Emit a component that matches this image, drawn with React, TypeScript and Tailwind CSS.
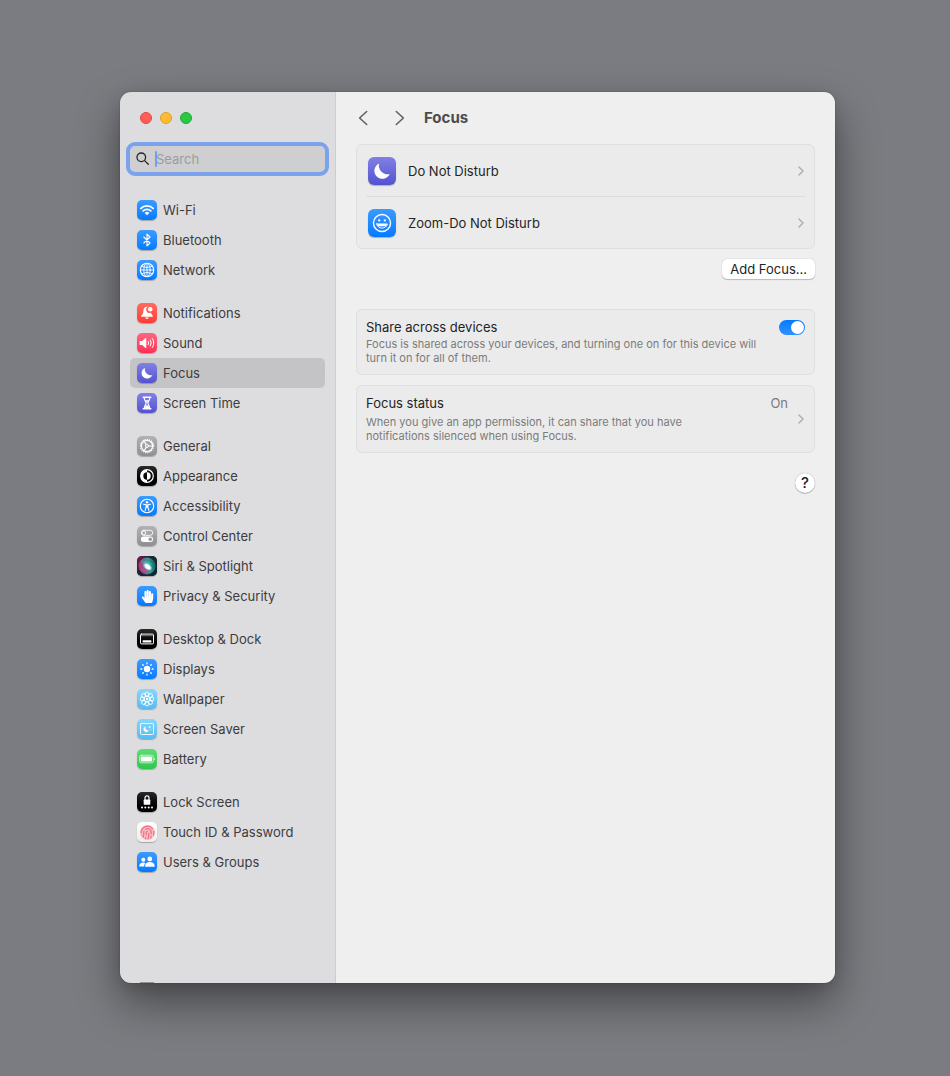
import { useState, type ReactNode } from "react";
import { Fingerprint } from "lucide-react";
import { FaHandPaper } from "react-icons/fa";
import clsx from "clsx";

const BLUE = "bg-linear-to-b from-[#3a9bff] to-[#007aff]";
const RED = "bg-linear-to-b from-[#ff6a61] to-[#ff3b30]";
const PINK = "bg-linear-to-b from-[#ff6482] to-[#ff2d55]";
const PURPLE = "bg-linear-to-b from-[#8280e6] to-[#5452d0]";
const GRAY = "bg-linear-to-b from-[#b2b2b5] to-[#8f8f93]";
const BLACK = "bg-linear-to-b from-[#2a2a2a] to-black";
const SKY = "bg-linear-to-b from-[#84d8fb] to-[#56bbf0]";
const GREEN = "bg-linear-to-b from-[#5edc74] to-[#2bc84a]";
const WHITE = "bg-linear-to-b from-white to-[#ececec]";

function Glyph({ children }: { children: ReactNode }) {
  return (
    <svg viewBox="0 0 20 20" className="size-full" fill="none" stroke="white" strokeLinecap="round" strokeLinejoin="round" aria-hidden="true">
      {children}
    </svg>
  );
}

const Moon = () => (
  <Glyph>
    <path d="M7.9 4.7A5.7 5.7 0 1 0 15.5 12.1 6.2 6.2 0 0 1 7.9 4.7Z" fill="white" stroke="none" />
  </Glyph>
);

const Wifi = () => (
  <Glyph>
    <path d="M3.9 8.4a8.6 8.6 0 0 1 12.2 0M6.2 10.9a5.4 5.4 0 0 1 7.6 0" strokeWidth="1.8" />
    <path d="M10 15.2 7.7 12.9a3.2 3.2 0 0 1 4.6 0Z" fill="white" stroke="none" />
  </Glyph>
);

const Bluetooth = () => (
  <Glyph>
    <path d="m6.8 7 6.2 6-3 2.9V4.1L13 7l-6.2 6" strokeWidth="1.1" />
  </Glyph>
);

const Network = () => (
  <Glyph>
    <circle cx="10" cy="10" r="6.7" strokeWidth="1.1" />
    <ellipse cx="10" cy="10" rx="3.2" ry="6.7" strokeWidth=".9" />
    <path d="M3.4 10h13.2M10 3.4v13.2M4.8 6.2c3 1.7 7.4 1.7 10.4 0M4.8 13.8c3-1.7 7.4-1.7 10.4 0" strokeWidth=".9" />
  </Glyph>
);

const Bell = () => (
  <Glyph>
    <path d="M10.9 3.8C7.7 3.4 6.4 5.7 6.3 8.2c-.1 2.200-.6 2.900-1.900 4.200-.5.600-.2 1.400.6 1.400h10c.8 0 1.100-.8.6-1.400-.9-1-1.500-1.600-1.600-2.900a3.200 3.200 0 0 1-3.100-5.700ZM8.200 14.500h3.600c-.3 1.900-3.300 1.900-3.600 0Z" fill="white" stroke="none" />
    <circle cx="13.200" cy="6.200" r="2.300" fill="white" stroke="none" />
  </Glyph>
);

const Sound = () => (
  <Glyph>
    <path d="M3.2 8h2l3.300-2.900c.4-.3.800-.1.800.4v9c0 .5-.4.700-.8.400L5.200 12h-2c-.4 0-.6-.2-.6-.6V8.600c0-.4.200-.6.600-.6Z" fill="white" stroke="none" />
    <path d="M11.200 8.300q1.100 1.700 0 3.400M13.300 7q2.100 3 0 6M15.400 5.600q3 4.400 0 8.800" strokeWidth="1" />
  </Glyph>
);

const Hourglass = () => (
  <Glyph>
    <path d="M6.200 4.200h7.600M6.200 15.800h7.600" strokeWidth="1.500" />
    <path d="M7.300 4.700c0 3 1.800 3.600 1.800 5.300s-1.800 2.300-1.800 5.300h5.400c0-3-1.800-3.600-1.800-5.300s1.800-2.300 1.800-5.300" strokeWidth="1.200" />
    <path d="M8.200 7.200h3.600L10 9.800ZM7.800 15.300c0-1.800 1.100-2.600 2.200-3.300 1.100.7 2.200 1.500 2.200 3.300Z" fill="white" stroke="none" />
  </Glyph>
);

const Gear = () => (
  <Glyph>
    <circle cx="10" cy="10" r="6.600" strokeWidth="1.200" strokeDasharray="1.200 1" strokeLinecap="butt" />
    <circle cx="10" cy="10" r="5.600" strokeWidth="1.200" />
    <circle cx="10" cy="10" r="1.500" strokeWidth="1" />
    <path d="M11.600 10h4M9.200 8.600 7.200 5.200M9.200 11.400l-2 3.400" strokeWidth="1.100" />
  </Glyph>
);

const Appearance = () => (
  <Glyph>
    <circle cx="10" cy="10" r="6.300" strokeWidth="1.200" />
    <path d="M10 3.700a6.300 6.300 0 0 0 0 12.600v-2.600a3.700 3.700 0 0 1 0-7.400ZM10 6.300a3.700 3.700 0 0 1 0 7.400Z" fill="white" stroke="none" />
  </Glyph>
);

const Accessibility = () => (
  <Glyph>
    <circle cx="10" cy="10" r="6.700" strokeWidth="1.100" />
    <circle cx="10" cy="6.300" r="1.200" fill="white" stroke="none" />
    <path d="m6.500 8.200 2.600.6v2.300L8.200 14.400M13.500 8.200l-2.600.6v2.300l.9 3.300" strokeWidth="1.100" />
    <path d="M9 8.500h2v3.200H9Z" fill="white" stroke="none" />
  </Glyph>
);

const ControlCenter = () => (
  <Glyph>
    <rect x="4.300" y="4.300" width="11.400" height="5" rx="2.500" strokeWidth=".9" />
    <circle cx="6.800" cy="6.800" r="1.900" strokeWidth=".9" />
    <rect x="3.900" y="10.600" width="12.200" height="5.400" rx="2.700" fill="white" stroke="none" />
    <circle cx="13.300" cy="13.300" r="1.800" fill="#97979b" stroke="none" />
  </Glyph>
);

const Siri = () => (
  <svg viewBox="0 0 20 20" className="size-full" aria-hidden="true">
    <defs>
      <linearGradient id="siri-bg" x1="0" y1="0" x2="1" y2=".6">
        <stop offset="0" stopColor="#8c1546" />
        <stop offset=".45" stopColor="#26213a" />
        <stop offset="1" stopColor="#0b2a30" />
      </linearGradient>
      <linearGradient id="siri-orb" x1="0" y1=".6" x2="1" y2=".4">
        <stop offset="0" stopColor="#d4245f" />
        <stop offset=".35" stopColor="#6c6aa0" />
        <stop offset=".65" stopColor="#2a9c94" />
        <stop offset="1" stopColor="#155f5a" />
      </linearGradient>
      <radialGradient id="siri-core">
        <stop offset="0" stopColor="white" />
        <stop offset=".5" stopColor="#dcecff" stopOpacity=".9" />
        <stop offset="1" stopColor="#7fb9f0" stopOpacity="0" />
      </radialGradient>
    </defs>
    <rect width="20" height="20" fill="url(#siri-bg)" />
    <circle cx="10" cy="10" r="8.200" fill="url(#siri-orb)" stroke="#4fb5a5" strokeOpacity=".5" strokeWidth=".6" />
    <path d="M3.500 6.500C7 3.500 14 4.500 16.500 9.500 12 7.500 8 7 3.500 6.500Z" fill="#39c793" opacity=".5" />
    <path d="M3 11.500c3 5 8 6 11.500 3.500-4-.2-8-1.500-11.500-3.500Z" fill="#e8427a" opacity=".7" />
    <ellipse cx="10.500" cy="10.500" rx="6" ry="3.800" fill="url(#siri-core)" transform="rotate(38 10.500 10.500)" />
    <ellipse cx="10.800" cy="10.800" rx="3.200" ry="1.700" fill="white" transform="rotate(38 10.800 10.800)" />
  </svg>
);

const Hand = () => (
  <span className="flex size-full items-center justify-center">
    <FaHandPaper className="size-[13px] text-white" />
  </span>
);

const Dock = () => (
  <Glyph>
    <rect x="3.500" y="5.100" width="13" height="9.800" rx="1" strokeWidth="1" />
    <path d="M4 6.700h12" strokeWidth=".7" opacity=".6" />
    <rect x="5.600" y="11.300" width="8.800" height="2.200" rx=".4" fill="white" stroke="none" />
  </Glyph>
);

const Sun = () => (
  <Glyph>
    <circle cx="10" cy="10" r="3.200" fill="white" stroke="none" />
    <path d="M10 3.900v.9M10 15.200v.9M3.900 10h.9M15.200 10h.9M5.700 5.700l.6.600M13.700 13.700l.6.600M5.700 14.300l.6-.6M13.700 6.300l.6-.6" strokeWidth="1.300" />
  </Glyph>
);

const Flower = () => (
  <Glyph>
    {[0, 45, 90, 135, 180, 225, 270, 315].map((deg) => (
      <circle key={deg} cx="10" cy="5.200" r="2.100" strokeWidth=".9" transform={`rotate(${deg} 10 10)`} />
    ))}
    <circle cx="10" cy="10" r="2.900" strokeWidth=".9" />
    <circle cx="10" cy="10" r="1.200" fill="white" stroke="none" />
  </Glyph>
);

const ScreenSaver = () => (
  <Glyph>
    <rect x="3.500" y="4.500" width="13" height="11" rx="1" strokeWidth=".9" />
    <path d="M8.200 7.800a2.700 2.700 0 1 0 3.500 3.700A3 3 0 0 1 8.200 7.800Z" fill="white" stroke="white" strokeWidth=".3" />
    <path d="M12.700 7.500v1.200M12.100 8.100h1.200M13.600 10.700h.1" strokeWidth=".8" />
  </Glyph>
);

const Battery = () => (
  <Glyph>
    <rect x="2.500" y="6.200" width="13.800" height="7.600" rx="2" strokeWidth=".8" opacity=".8" />
    <rect x="3.700" y="7.400" width="11.400" height="5.200" rx="1.100" fill="white" stroke="none" />
    <path d="M17.300 8.800c1 .4 1 2 0 2.400Z" fill="white" stroke="none" />
  </Glyph>
);

const Lock = () => (
  <Glyph>
    <path d="M8 8V5.900a2 2 0 0 1 4 0V8" strokeWidth="1.200" />
    <rect x="6.700" y="7.400" width="6.600" height="5.400" rx=".9" fill="white" stroke="none" />
    {[5, 8.300, 11.700, 15].map((cx) => (
      <circle key={cx} cx={cx} cy="15.500" r="1" fill="white" stroke="none" />
    ))}
  </Glyph>
);

const TouchId = () => (
  <span className="flex size-full items-center justify-center">
    <span className="flex size-[15px] items-center justify-center overflow-hidden rounded-full bg-[#f9bcc4]">
      <Fingerprint className="size-[15px] text-[#ee7384]" strokeWidth={2} />
    </span>
  </span>
);

const Users = () => (
  <Glyph>
    <g fill="white" stroke="none">
      <circle cx="6.300" cy="7.700" r="2" />
      <path d="M2.200 14.200c0-2.400 1.700-3.800 4.100-3.800.8 0 1.500.2 2.200.5-.9.800-1.300 1.900-1.300 3.500H2.600c-.3 0-.4-.1-.4-.2Z" />
      <circle cx="12.800" cy="7" r="2.400" />
      <path d="M8.100 14.200c0-2.600 2-4.100 4.700-4.100s4.900 1.500 4.900 4.100c0 .4-.3.500-.6.500H8.700c-.4 0-.6-.1-.6-.5Z" />
    </g>
  </Glyph>
);

const Smiley = () => (
  <Glyph>
    <circle cx="10" cy="10" r="6.100" strokeWidth="1" />
    <circle cx="8" cy="8.200" r=".8" fill="white" stroke="none" />
    <circle cx="12" cy="8.200" r=".8" fill="white" stroke="none" />
    <path d="M6.200 10.700h7.600c-.5 3.900-7.100 3.900-7.600 0Z" strokeWidth=".7" />
    <path d="M6.600 10.800h6.800l-.5 1.500H7.100Z" fill="white" stroke="none" />
  </Glyph>
);

type Item = { label: string; tint: string; icon: () => ReactNode };

const GROUPS: Item[][] = [
  [
    { label: "Wi-Fi", tint: BLUE, icon: Wifi },
    { label: "Bluetooth", tint: BLUE, icon: Bluetooth },
    { label: "Network", tint: BLUE, icon: Network },
  ],
  [
    { label: "Notifications", tint: RED, icon: Bell },
    { label: "Sound", tint: PINK, icon: Sound },
    { label: "Focus", tint: PURPLE, icon: Moon },
    { label: "Screen Time", tint: PURPLE, icon: Hourglass },
  ],
  [
    { label: "General", tint: GRAY, icon: Gear },
    { label: "Appearance", tint: BLACK, icon: Appearance },
    { label: "Accessibility", tint: BLUE, icon: Accessibility },
    { label: "Control Center", tint: GRAY, icon: ControlCenter },
    { label: "Siri & Spotlight", tint: BLACK, icon: Siri },
    { label: "Privacy & Security", tint: BLUE, icon: Hand },
  ],
  [
    { label: "Desktop & Dock", tint: BLACK, icon: Dock },
    { label: "Displays", tint: BLUE, icon: Sun },
    { label: "Wallpaper", tint: SKY, icon: Flower },
    { label: "Screen Saver", tint: SKY, icon: ScreenSaver },
    { label: "Battery", tint: GREEN, icon: Battery },
  ],
  [
    { label: "Lock Screen", tint: BLACK, icon: Lock },
    { label: "Touch ID & Password", tint: WHITE, icon: TouchId },
    { label: "Users & Groups", tint: BLUE, icon: Users },
  ],
];

const FOCUS_MODES: Item[] = [
  { label: "Do Not Disturb", tint: PURPLE, icon: Moon },
  { label: "Zoom-Do Not Disturb", tint: BLUE, icon: Smiley },
];

function Disclosure() {
  return (
    <svg viewBox="0 0 6 10" className="mr-px h-[10px] w-[6px] shrink-0" fill="none" stroke="#adadad" strokeWidth="1.400" strokeLinecap="round" strokeLinejoin="round" aria-hidden="true">
      <path d="M1 1l4 4-4 4" />
    </svg>
  );
}

function Sidebar() {
  const [selected, setSelected] = useState("Focus");
  const [query, setQuery] = useState("");

  return (
    <aside className="relative w-[216px] shrink-0 border-r border-[#cdcdcf] bg-[#dddddf] px-[10px]">
      <div className="flex gap-2 px-[10px] pt-5">
        <button type="button" aria-label="Close" className="size-3 rounded-full border border-[#e2463f] bg-[#ff5f57]" />
        <button type="button" aria-label="Minimize" className="size-3 rounded-full border border-[#e0a028] bg-[#febc2e]" />
        <button type="button" aria-label="Zoom" className="size-3 rounded-full border border-[#1fab33] bg-[#28c840]" />
      </div>

      <div className="relative mt-[22px] flex h-[26px] items-center rounded-[5px] bg-[#cfcfd1] outline-4 outline-[#7ba2ec]">
        <svg viewBox="0 0 14 14" className="ml-[6px] size-[14px] shrink-0" fill="none" stroke="#262626" strokeWidth="1.300" strokeLinecap="round" aria-hidden="true">
          <circle cx="5.300" cy="5.300" r="4.300" />
          <path d="m8.600 8.600 3.700 3.700" />
        </svg>
        <span className="absolute left-[25px] h-4 w-[2px] rounded-full bg-[#6f9ff0]" />
        <input
          type="text"
          aria-label="Search"
          placeholder="Search"
          value={query}
          onChange={(e) => setQuery(e.target.value)}
          className="ml-[6px] min-w-0 flex-1 bg-transparent text-[13px] leading-4 text-[#262626] placeholder:text-[#9c9c9f] focus:outline-none"
        />
      </div>

      <nav className="mt-[23px] space-y-[13px] pb-6">
        {GROUPS.map((group) => (
          <ul key={group[0].label}>
            {group.map(({ label, tint, icon: Icon }) => (
              <li key={label}>
                <button
                  type="button"
                  onClick={() => setSelected(label)}
                  className={clsx(
                    "flex h-[30px] w-full items-center gap-[6px] rounded-[5px] px-[7px] text-left text-[#3c3c3d]",
                    selected === label && "bg-[#c4c4c6]",
                  )}
                >
                  <span className={clsx("size-5 shrink-0 overflow-hidden rounded-[5px] shadow-[0_1px_1px_rgba(0,0,0,0.25)]", tint)}>
                    <Icon />
                  </span>
                  {label}
                </button>
              </li>
            ))}
          </ul>
        ))}
      </nav>
      <span className="absolute bottom-0 left-5 h-px w-[14px] bg-[#8f8f92]" />
    </aside>
  );
}

export default function App() {
  const [shared, setShared] = useState(true);

  return (
    <div className="flex min-h-screen bg-[#7b7c81] pt-[92px] pr-[115px] pb-[93px] pl-[120px] font-['Inter',sans-serif] text-[13px] leading-4 text-[#242424]">
      <div className="flex flex-1 rounded-[11px] shadow-[0_0_1px_rgba(0,0,0,0.6),0_20px_44px_rgba(0,0,0,0.42),0_4px_16px_rgba(0,0,0,0.12)]">
        <div className="flex flex-1 overflow-hidden rounded-[11px]">
          <Sidebar />

          <main className="flex min-w-0 flex-1 flex-col bg-[#efefef] px-5">
            <header className="flex h-[52px] shrink-0 items-center">
              <button type="button" aria-label="Back" className="flex w-[37px]">
                <svg viewBox="0 0 14 16" className="h-4 w-[14px]" fill="none" stroke="#606060" strokeWidth="1.600" strokeLinecap="round" strokeLinejoin="round">
                  <path d="M10.700 1.500 3.600 8l7.100 6.500" />
                </svg>
              </button>
              <button type="button" aria-label="Forward" className="flex w-[31px]">
                <svg viewBox="0 0 14 16" className="h-4 w-[14px]" fill="none" stroke="#606060" strokeWidth="1.600" strokeLinecap="round" strokeLinejoin="round">
                  <path d="M3.300 1.500 10.400 8l-7.100 6.500" />
                </svg>
              </button>
              <h1 className="text-[15px] leading-5 font-bold text-[#4c4c4c]">Focus</h1>
            </header>

            <ul className="divide-y divide-[#dcdcdc] rounded-[6px] border border-[#dfdfdf] bg-[#ebebeb] px-[9px]">
              {FOCUS_MODES.map(({ label, tint, icon: Icon }) => (
                <li key={label}>
                  <button type="button" className="flex h-[51px] w-full items-center gap-3 pl-[2px] text-left">
                    <span className={clsx("size-7 shrink-0 overflow-hidden rounded-[6px] shadow-[0_1px_1px_rgba(0,0,0,0.25)]", tint)}>
                      <Icon />
                    </span>
                    <span className="flex-1">{label}</span>
                    <Disclosure />
                  </button>
                </li>
              ))}
            </ul>

            <button type="button" className="mt-[10px] h-5 self-end rounded-[5px] bg-white px-2 shadow-[0_0_1px_rgba(0,0,0,0.3),0_1px_1px_rgba(0,0,0,0.2)]">
              Add Focus...
            </button>

            <section className="mt-[30px] flex items-start justify-between rounded-[6px] border border-[#dfdfdf] bg-[#ebebeb] px-[9px] py-[9px]">
              <div className="max-w-[410px] space-y-[2px]">
                <label htmlFor="share" className="block">Share across devices</label>
                <p className="text-[11px] leading-[14px] text-[#7b7b7b]">
                  Focus is shared across your devices, and turning one on for this device will turn it on for all of them.
                </p>
              </div>
              <input
                id="share"
                type="checkbox"
                role="switch"
                checked={shared}
                onChange={(e) => setShared(e.target.checked)}
                className="relative mt-px h-[15px] w-[26px] shrink-0 appearance-none rounded-full bg-[#c8c8c8] before:absolute before:top-px before:left-px before:size-[13px] before:rounded-full before:bg-white checked:bg-linear-to-b checked:from-[#007aff] checked:to-[#2f90ff] checked:before:left-3"
              />
            </section>

            <section className="mt-[10px] rounded-[6px] border border-[#dfdfdf] bg-[#ebebeb] px-[9px]">
              <button type="button" className="flex w-full items-center py-[9px] text-left">
                <span className="flex-1 space-y-1">
                  <span className="block">Focus status</span>
                  <span className="block max-w-[340px] text-[11px] leading-[14px] text-[#7b7b7b]">
                    When you give an app permission, it can share that you have notifications silenced when using Focus.
                  </span>
                </span>
                <span className="mr-[10px] self-start text-[#7b7b7b]">On</span>
                <Disclosure />
              </button>
            </section>

            <button type="button" aria-label="Help" className="mt-5 size-5 self-end rounded-full bg-white text-[15px] leading-5 font-medium shadow-[0_0_1px_rgba(0,0,0,0.4),0_1px_1px_rgba(0,0,0,0.2)]">
              ?
            </button>
          </main>
        </div>
      </div>
    </div>
  );
}
